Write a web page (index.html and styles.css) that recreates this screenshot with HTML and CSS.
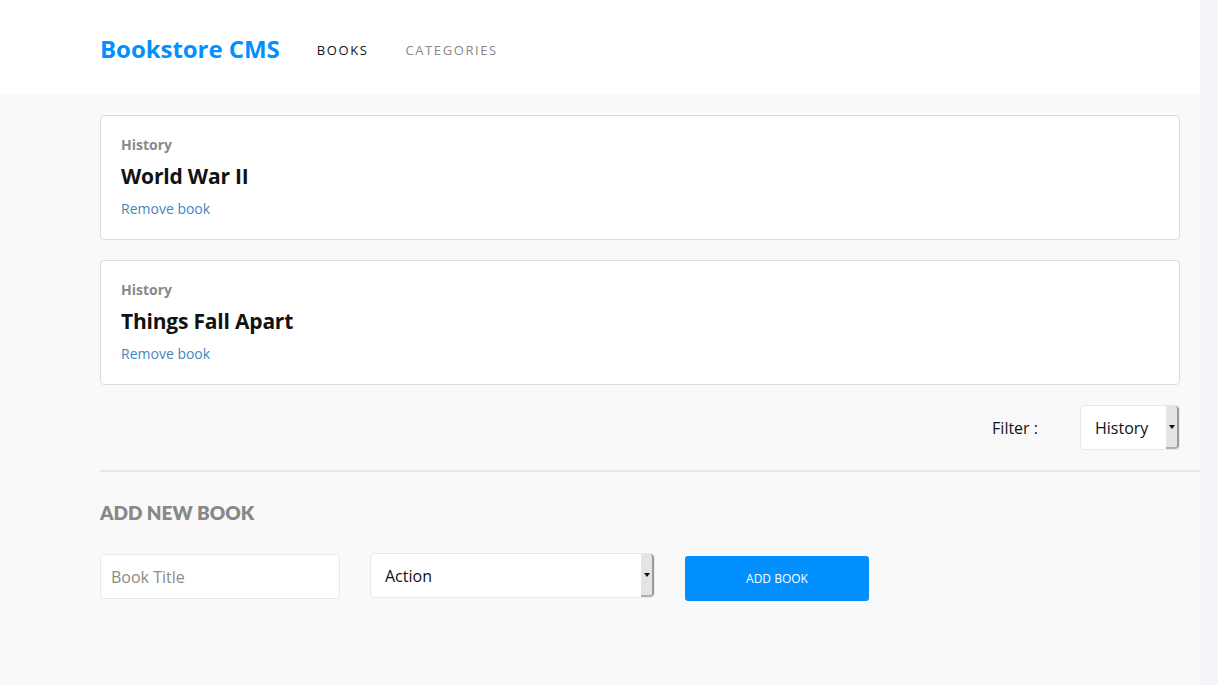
FILE: index.html
```html
<!DOCTYPE html>
<html lang="en">
<head>
<meta charset="utf-8">
<title>Bookstore CMS</title>
<link rel="stylesheet" href="styles.css">
</head>
<body>
<div class="page">
  <header class="header">
    <h1 class="logo">Bookstore CMS</h1>
    <nav class="nav">
      <a class="nav-link active" href="#">BOOKS</a>
      <a class="nav-link" href="#">CATEGORIES</a>
    </nav>
  </header>
  <main class="main">
    <ul class="book-list">
      <li class="card">
        <p class="category">History</p>
        <h2 class="title">World War II</h2>
        <a class="remove" href="#">Remove book</a>
      </li>
      <li class="card">
        <p class="category">History</p>
        <h2 class="title">Things Fall Apart</h2>
        <a class="remove" href="#">Remove book</a>
      </li>
    </ul>
    <div class="filter-row">
      <span class="filter-label">Filter :</span>
      <div class="select filter-select">
        <span class="select-value">History</span>
        <span class="select-arrow"></span>
      </div>
    </div>
  </main>
  <section class="add">
    <h3 class="add-heading">ADD NEW BOOK</h3>
    <form class="add-form">
      <input class="input" type="text" placeholder="Book Title">
      <div class="select form-select">
        <span class="select-value">Action</span>
        <span class="select-arrow"></span>
      </div>
      <button class="btn" type="button">ADD BOOK</button>
    </form>
  </section>
</div>
</body>
</html>
```
FILE: styles.css
```css
* { box-sizing: border-box; }
html { background: #f4f5f9; }
body {
  margin: 0;
  font-family: "Open Sans", "Noto Sans", sans-serif;
  color: #121212;
}
.page {
  width: 1200px;
  min-height: 685px;
  background: #f9f9f9;
}
.header {
  background: #fff;
  height: 95px;
  display: flex;
  align-items: center;
  padding: 0 100px;
}
.logo {
  margin: 2px 37px 0 0;
  font-size: 24px;
  font-weight: 700;
  color: #0290ff;
  letter-spacing: -0.05px;
}
.nav { display: flex; gap: 37px; padding-top: 4px; }
.nav-link {
  text-decoration: none;
  font-size: 13px;
  letter-spacing: 1.6px;
  color: #888;
}
.nav-link.active { color: #121212; }
.main { padding: 20px 20px 0 100px; }
.book-list {
  list-style: none;
  margin: 0;
  padding: 0;
  display: flex;
  flex-direction: column;
  gap: 20px;
}
.card {
  background: #fff;
  border: 1px solid #dcdcdc;
  border-radius: 4px;
  height: 125px;
  padding: 19px 20px;
}
.category {
  margin: 0;
  font-size: 14px;
  font-weight: 700;
  color: #898989;
  line-height: 20px;
}
.title {
  margin: 7px 0 0;
  font-size: 21px;
  font-weight: 700;
  line-height: 28px;
  letter-spacing: -0.2px;
}
.remove {
  display: block;
  margin-top: 9px;
  font-size: 14px;
  line-height: 20px;
  color: #4386bf;
  text-decoration: none;
}
.filter-row {
  display: flex;
  justify-content: flex-end;
  align-items: center;
  gap: 42px;
  padding: 20px 0 20px;
}
.filter-label { font-size: 16px; padding-top: 1px; }
.select {
  position: relative;
  display: flex;
  align-items: center;
  background: #fff;
  border: 1px solid #e8e8e8;
  border-radius: 4px;
  height: 45px;
  font-size: 16px;
}
.select-value { padding-top: 1px; }
.filter-select { width: 100px; padding-left: 14px; }
.form-select { width: 285px; padding-left: 14px; }
.select-arrow {
  position: absolute;
  right: 0;
  top: 0;
  bottom: 0;
  width: 13px;
  background: #e4e4e4;
  border-right: 2px solid #9a9a9a;
  border-bottom: 2px solid #b0b0b0;
  border-radius: 0 4px 4px 0;
}
.select-arrow::after {
  content: "";
  position: absolute;
  left: 3px;
  top: 50%;
  margin-top: -2px;
  border-left: 3px solid transparent;
  border-right: 3px solid transparent;
  border-top: 4px solid #111;
}
.add {
  margin-left: 100px;
  border-top: 2px solid #e6e6e6;
  padding-top: 29px;
}
.add-heading {
  margin: 0;
  font-family: "Lato", sans-serif;
  font-size: 19px;
  font-weight: 800;
  color: #888;
  letter-spacing: 0;
  line-height: 24px;
}
.add-form {
  display: flex;
  align-items: flex-start;
  gap: 30px;
  margin-top: 28px;
}
.input {
  width: 240px;
  height: 45px;
  border: 1px solid #e8e8e8;
  border-radius: 4px;
  background: #fff;
  padding: 0 10px;
  font-family: inherit;
  font-size: 16px;
  margin-top: 1px;
}
.input::placeholder { color: #8a8a8a; }
.btn {
  width: 184px;
  height: 45px;
  border: 0;
  border-radius: 3px;
  background: #0290ff;
  color: #fff;
  font-family: inherit;
  font-size: 12px;
  margin-top: 3px;
}
```
